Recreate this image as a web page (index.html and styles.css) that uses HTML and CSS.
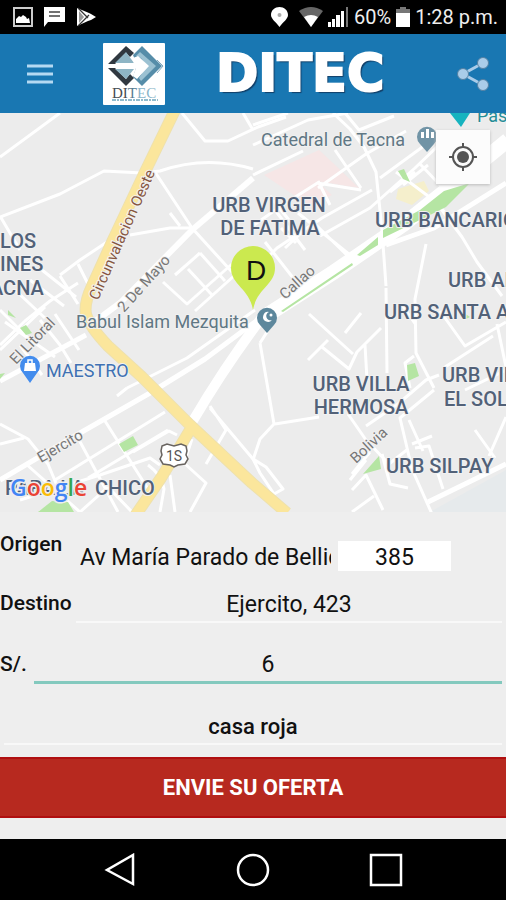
FILE: index.html
```html
<!DOCTYPE html>
<html lang="es">
<head>
<meta charset="utf-8">
<meta name="viewport" content="width=device-width, initial-scale=1">
<title>DITEC</title>
<link rel="stylesheet" href="styles.css">
</head>
<body>
<div class="status">
  <div class="status-group status-left">
    <svg width="20" height="20" viewBox="0 0 20 20"><rect x="1" y="1" width="18" height="18" fill="none" stroke="#ccc" stroke-width="2"/><path d="M3 16V12l3-3 2 1 2-2 3 2 1 2 2-1 1 5z" fill="#fff"/></svg>
    <svg width="21" height="20" viewBox="0 0 21 20"><path d="M0 0h21v15H4l-4 5z" fill="#fff"/><path d="M5 5h11M5 9h11" stroke="#444" stroke-width="1.5"/></svg>
    <svg width="20" height="20" viewBox="0 0 20 20"><path d="M1 1L13 6l2 1 5 3-5 3-3 1L1 19z" fill="#fff"/><path d="M2 1l10 10M2 19L13 8" stroke="#333" stroke-width="1.3"/><path d="M3 4v12l5-6z" fill="#999"/></svg>
  </div>
  <div class="status-group status-right">
    <svg width="17" height="20" viewBox="0 0 17 20"><path d="M8.500 0C4 0 0 3 0 8c0 4 5 7 8.500 12C12 15 17 12 17 8c0-5-4-8-8.500-8z" fill="#fff"/><circle cx="8.500" cy="8" r="2" fill="#aaa"/></svg>
    <svg class="wifi" width="24" height="20" viewBox="0 0 24 20"><path d="M0 4Q12-4 24 4L12 20z" fill="#666"/><path d="M5 10q7-4 14 0l-7 10z" fill="#fff"/></svg>
    <svg width="21" height="20" viewBox="0 0 21 20"><path d="M0 15h3v5H0zM4 12h3v8H4zM8 8h4v12H8zM13 4h3v16h-3z" fill="#fff"/><path d="M18 0h2v20h-2z" fill="#777"/></svg>
    <span class="battery-text">60%</span>
    <svg width="14" height="20" viewBox="0 0 14 20"><path d="M4 0h6v2h4v5H0V2h4z" fill="#777"/><path d="M0 6h14v14H0z" fill="#fff"/></svg>
    <span class="clock">1:28 p.m.</span>
  </div>
</div>

<header class="appbar">
  <button class="icon-button" type="button" aria-label="Menú">
    <svg width="28" height="20" viewBox="0 0 28 20"><path d="M1 2h26M1 10h26M1 18h26" stroke="#b5d9f2" stroke-width="3"/></svg>
  </button>
  <svg class="logo" width="62" height="62" viewBox="0 0 62 62" aria-hidden="true">
    <rect width="62" height="62" rx="1" fill="#fff"/>
    <path d="M39 3l-9 9 4 10-4 12 9 9 20-20z" fill="#568da9"/>
    <path d="M37 9l-4 4 5 2 6 8-8 12 2 3 15-15z" fill="#9bc1d2"/>
    <path d="M5 21L23 3l8 7-4 4-4-4-11 11zM5 25l18 18 8-8-4-4-4 5-11-11z" fill="#303840"/>
    <path d="M12 20L23 9l8 11zM12 26l11 10 8-10z" fill="#8eb5c5"/>
    <path d="M4 20q2 2 7 1h20l-1-6 5-2 11 10-12 13-4-3 3-8H12q-5-1-8-5z" fill="#fff"/>
    <path d="M54 17l6 6-6 7" fill="none" stroke="#80a7be"/>
    <text class="logo-text" x="9" y="55" fill="#454b52">DI<tspan fill="#557b91">T</tspan><tspan fill="#8bb5c9">EC</tspan></text>
    <path d="M9 57h46" stroke="#6ca5bd" stroke-width="1.500" stroke-dasharray="4 1 2 1"/>
  </svg>
  <h1 class="title">DITEC</h1>
  <button class="icon-button" type="button" aria-label="Compartir">
    <svg width="34" height="36" viewBox="0 0 34 36"><path d="M27 7L7 18l20 11" fill="none" stroke="#a9cce9" stroke-width="3"/><g fill="#a9cce9" stroke="#5481a3"><circle cx="27" cy="7" r="5.500"/><circle cx="7" cy="18" r="5.500"/><circle cx="27" cy="29" r="5.500"/></g></svg>
  </button>
</header>

<main class="content">
<section class="map" aria-label="Mapa">
  <svg class="map-canvas" viewBox="0 113 506 399" preserveAspectRatio="xMidYMid slice">
    <path d="M0 100h506v420H0z" fill="#ececec"/>
    <path d="M430 512l76-42v42z" fill="#e6eaec"/>
    <path d="M264 175l55-25 14 13 26 25-42-7 15 14-22 11z" fill="#f6e6e6"/>
    <g fill="#f5efcc"><path d="M398 189l26-8 5 10-17 14-16-6z"/></g>
    <g class="roads">
      <path d="M0 157l60-44M0 217l60-23 44-23 38 2 18-2q46-16 93-2M182 113l23 28h23l30-14 28-10M243 113l10 17M155 172l37 56 40 44M130 235l40-7h22M170 213l10 13M60 275l20-15 30-20M78 264l12 24M42 270l34 27M30 280l34 26M15 290l30 28M0 216l20 34M0 310l28 28M60 276l18 28M0 345l25-24 25-20 28-18"/>
      <path d="M175 275l25-22M188 269l24 26M200 253l25 28M163 282l24 22 45-40M195 311l40-36"/>
      <path d="M127 388l60-30 68-48M127 388l-10 8M0 424l28 15 20 25 20 48M105 421l43 68M0 444l24-6M26 464l54 48M78 438l40 74M55 480l110-68M88 478l80-48M133 452l36-21 8 4M20 500l80-25 50-17 10 7M170 475l5 37M148 465q14 10 16 24l-4 23M192 439l-8 24 22 20-16 29M206 464l20-34-16-24M184 464l-22-6M210 408l43 51M40 512l40-24M80 512l28-25M108 487l24 25"/>
      <path d="M0 350l45-43M40 320l20 25 11 18M20 345l22 30M55 314l24 36M5 322l50 35"/>
      <path d="M253 125l35-12M253 145l55-25 40-7M253 175l50-24M318 188l48-34 40-23M333 113l17 16 14 18 12 25 6 58 4 56M345 113l14 17 35-14M335 150l26 38M372 190l-50 28-45 30-22 22M317 183l44 7M254 225l27-19 38-24M318 181l12 24M298 213l52 42M316 225l35 34M270 196l30 38-15 14M320 236l50-28 45-40 25-24M281 228l15 15M275 210l30 40M265 242l36 46"/>
      <path d="M380 178l52-38M396 172l40 30 16 19M420 164l21 22M390 192l25-20M403 185l25-20"/>
      <path d="M436 202l26 35 15 25 25 34M260 343l14 81-14 15-7 21M275 424l44-7M267 332l-7 11M309 314l44 40M308 360l20-20M322 347l27 22 8-17 24-24M345 333l16-20M365 345l2 35M386 288l1 85M426 244l-11 55 1 54 18 35M402 305l14 20M414 356l-9 7 5 25M366 426l32-22 28-24 13-5M348 414l18 26 23 24 19-15M434 390l-34 28 12 51 20 45M409 420l14 31M352 474l18-22M352 490l14-15 17 35M352 512l22-16M382 454l8 30 18 4M412 444l20-8M415 448l14-2 14 43M475 430l20 28M506 417l-17 39M253 459l13 8 17 22-9 5-14-21-7-14M440 311l25 35 41-24M497 324l10 48M445 367l48-31M465 390l41-20M350 480l16-20"/>
      <path d="M0 480l73-43 77-44 55-34 50-37" stroke-width="5"/>
      <path d="M0 381l86-46" stroke-width="5"/>
      <path d="M253 178l-61 52-72 73-34 25" stroke-width="6"/>
      <path d="M428 502l78-38M386 245l48-17 72-45" stroke-width="5"/>
    </g>
    <g fill="none" stroke="#fff"><path d="M508 140l-44 36-60 48-70 48-70 45" stroke-width="15"/><path d="M263 316q-38 50-72 108" stroke-width="10"/></g>
    <g fill="#b5e5a3">
      <path d="M281 311l71-48 1 2-70 47zM357 255l21-18v8l-18 11zM383 230l37-20 24-19 26-8-24 24-22 11-41 20z"/>
      <path d="M119 444l14-8 5 9-14 7zM38 512l14-11 16 1 6 10zM363 474l16-18 2 13zM407 365l8-2 4 13-11 5zM364 403l6-4-5 16zM398 171l6-2 6 13-7-3zM0 374l5-1-5 6zM8 310l8 8-8-3zM20 328l6-3 6 8-6 2zM464 313l6 4-4 2z"/>
    </g>
    <g fill="none" stroke-linejoin="round"><path d="M176 108l-32 66-32 68-20 44q-8 17-6 28 3 12 22 32l34 31 48 48 62 58 35 30M190 430l-29 48-26 38" stroke="#eee1ad" stroke-width="12"/><path d="M176 108l-32 66-32 68-20 44q-8 17-6 28 3 12 22 32l34 31 48 48 62 58 35 30M190 430l-29 48-26 38" stroke="#fbe69c" stroke-width="10"/></g>

    <g class="street">
      <text transform="translate(98 301) rotate(-66)" class="brown">Circunvalacion Oeste</text>
      <text transform="translate(124 313) rotate(-48)">2 De Mayo</text>
      <text transform="translate(285 300) rotate(-42)">Callao</text>
      <text transform="translate(16 365) rotate(-46)">El Litoral</text>
      <text transform="translate(41 463) rotate(-30)">Ejercito</text>
      <text transform="translate(356 464) rotate(-43)">Bolivia</text>
    </g>
    <g class="area">
      <text x="0" y="248">LOS</text><text x="0" y="271">INES</text><text x="-10" y="295">ACNA</text>
      <text x="269" y="212" text-anchor="middle">URB VIRGEN</text><text x="270" y="235" text-anchor="middle">DE FATIMA</text>
      <text x="375" y="227">URB BANCARIO</text><text x="448" y="287">URB ALTO</text><text x="384" y="319">URB SANTA ANA</text>
      <text x="361" y="391" text-anchor="middle">URB VILLA</text><text x="361" y="414" text-anchor="middle">HERMOSA</text>
      <text x="442" y="382">URB VILLA</text><text x="444" y="406">EL SOL</text><text x="386" y="473">URB SILPAY</text>
      <text x="5" y="495">PARA LA</text><text x="95" y="495">CHICO</text>
    </g>
    <g class="place">
      <text x="261" y="146">Catedral de Tacna</text><text x="76" y="328">Babul Islam Mezquita</text>
      <text x="46" y="377" class="shop">MAESTRO</text><text x="477" y="122" class="teal">Paseo</text>
    </g>
    <path d="M450 113h20l-9 14z" fill="#16b3bf"/>
    <g transform="translate(427 137)"><path d="M0 15l-7-8a10 10 0 1 1 14 0z" fill="#7194a6"/><path d="M-6 1v-6h3V1zM-1 1v-9h3V1zM4 1v-6h3V1z" fill="#fff"/></g>
    <g transform="translate(267 318)"><path d="M0 15l-7-8a10 10 0 1 1 14 0z" fill="#5d879c"/><path d="M2-6A5 5 0 1 0 5 2 4 4 0 1 1 2-6z" fill="#fff"/><circle cx="4" cy="-3" r="1.500" fill="#fff"/></g>
    <g transform="translate(30 366)"><path d="M0 17l-7-10a10 10 0 1 1 14 0z" fill="#438ced"/><path d="M-5-3H5l1 8H-6z" fill="#fff"/><path d="M-2-2v-4h4v4" fill="none" stroke="#fff" stroke-width="1.500"/></g>
    <path d="M253 310c-4-22-22-25-22-42a22 22 0 0 1 44 0c0 17-18 20-22 42z" fill="#cbe94f"/>
    <text x="256" y="280" text-anchor="middle" class="pin">D</text>
    <path d="M162 446l5-2 7 2 7-2 5 2 1 5-1 4 2 4-3 5-7 1-4 2-4-2-7-1-3-5 2-4-1-4z" fill="#fff" stroke="#68635f" stroke-width="1.500"/>
    <text x="174" y="461" text-anchor="middle" class="shield">1S</text>
    <text x="10" y="496" class="google"><tspan fill="#4285f4">G</tspan><tspan fill="#ea4335">o</tspan><tspan fill="#fbbc05">o</tspan><tspan fill="#4285f4">g</tspan><tspan fill="#34a853">l</tspan><tspan fill="#ea4335">e</tspan></text>
  </svg>
  <button class="locate" type="button" aria-label="Mi ubicación">
    <svg width="30" height="30" viewBox="0 0 30 30"><circle cx="15" cy="15" r="10" fill="none" stroke="#555" stroke-width="2"/><circle cx="15" cy="15" r="6" fill="#555"/><path d="M15 1v5M15 24v5M1 15h5M24 15h5" stroke="#555" stroke-width="2"/></svg>
  </button>
</section>

<form class="trip">
  <div class="row origin"><label for="origen">Origen</label><input id="origen" class="street-input" type="text" value="Av María Parado de Bellido"><input class="number" type="text" value="385" aria-label="Número"></div>
  <div class="row"><label for="destino">Destino</label><input id="destino" class="line" type="text" value="Ejercito, 423"></div>
  <div class="row price"><label for="oferta">S/.</label><input id="oferta" class="line active" type="text" value="6"></div>
  <div class="row note"><input class="line strong" type="text" value="casa roja" aria-label="Referencia"></div>
  <button class="submit" type="button">ENVIE SU OFERTA</button>
</form>
</main>

<nav class="system-nav">
  <button type="button" aria-label="Atrás"><svg width="34" height="34" viewBox="0 0 34 34"><path d="M30 2v29L4 17z" fill="none" stroke="#fff" stroke-width="2.500"/></svg></button>
  <button type="button" aria-label="Inicio"><svg width="34" height="34" viewBox="0 0 34 34"><circle cx="17" cy="17" r="15" fill="none" stroke="#fff" stroke-width="2.500"/></svg></button>
  <button type="button" aria-label="Recientes"><svg width="34" height="34" viewBox="0 0 34 34"><path d="M2 2h30v30H2z" fill="none" stroke="#fff" stroke-width="2.500"/></svg></button>
</nav>
</body>
</html>
```
FILE: styles.css
```css
* { box-sizing: border-box; }
body {
  margin: 0;
  min-height: 100vh;
  display: flex;
  flex-direction: column;
  background: #eee;
  color: #111;
  font-family: Roboto, "Liberation Sans", sans-serif;
}
button { padding: 0; border: 0; background: none; cursor: pointer; }
svg { display: block; flex: none; }

.status {
  height: 34px;
  padding: 0 8px 0 13px;
  display: flex;
  align-items: center;
  justify-content: space-between;
  background: #000;
  color: #eee;
  white-space: nowrap;
}
.status-group { display: flex; align-items: center; }
.status-left { gap: 11px; }
.status-right { gap: 5px; }
.wifi { margin-left: 6px; }
.battery-text,
.clock { font-size: 20px; }

.appbar {
  height: 79px;
  padding: 0 16px 0 26px;
  display: flex;
  align-items: center;
  background: #1977b2;
}
.logo { margin-left: 49px; }
.logo-text { font: 15px "Liberation Serif", serif; }
.title {
  flex: 1;
  margin: 0 0 0 51px;
  color: #fff;
  font: 700 51px/60px "DejaVu Sans", sans-serif;
  -webkit-text-stroke: 2px #fff;
  text-shadow: 2px 2px 1px #123f68;
}

.content { flex: 1; display: flex; flex-direction: column; }
.map { position: relative; flex: 1 0 300px; overflow: hidden; }
.map-canvas { position: absolute; inset: 0; width: 100%; height: 100%; }
.roads { fill: none; stroke: #fff; stroke-width: 3px; stroke-linejoin: round; }
.area text, .place text, .street text { paint-order: stroke; stroke: #f1f1f1; stroke-width: 2px; }
.area { font-size: 20px; font-weight: 500; fill: #526178; }
.place { font-size: 18px; fill: #607784; }
.place .shop { fill: #4071b3; }
.place .teal { fill: #258d96; }
.street { font-size: 15px; fill: #777; }
.street .brown { fill: #86563f; }
.pin { font: 28px "Liberation Sans", sans-serif; fill: #111; }
.shield { font-size: 14px; fill: #555; }
.google { font: 600 23px "Open Sans", sans-serif; paint-order: stroke; stroke: #eee; stroke-width: 3px; }
.locate {
  position: absolute;
  top: 17px;
  right: 16px;
  width: 54px;
  height: 54px;
  display: grid;
  place-items: center;
  background: #fcfcfc;
  box-shadow: 0 1px 3px #bbb;
}

.trip { padding: 29px 0 21px; }
.row { display: flex; height: 38px; padding-right: 4px; align-items: center; }
.row label { font-size: 21px; line-height: 24px; font-weight: 500; }
.row input {
  min-width: 0;
  padding: 2px 0 0;
  border: 0;
  border-radius: 0;
  outline: 0;
  background: transparent;
  color: #111;
  font-family: inherit;
  font-size: 23px;
  text-align: center;
}
.row .street-input { flex: 0 1 251px; height: 30px; text-align: left; }
.row .number { flex: 0 1 113px; height: 30px; margin-left: 7px; background: #fff; }
.row .line { flex: 1; height: 40px; padding-top: 4px; border-bottom: 2px solid #f8f8f8; }
.row .active { border-bottom: 3px solid #83c9be; }
.row .strong { font-size: 22px; font-weight: 500; }
.origin { height: 30px; margin-bottom: 13px; align-items: flex-start; }
.origin label { flex: 0 0 80px; line-height: 6px; }
.row label[for="destino"] { flex: 0 0 76px; }
.price { margin: 23px 0; }
.price label { flex: 0 0 34px; }
.note { padding-left: 4px; margin-bottom: 13px; }
.submit {
  display: block;
  width: 100%;
  height: 61px;
  border: 1px solid #b00f10;
  border-width: 2px 0;
  background: #b7291f;
  color: #fff;
  font: 700 22px Roboto, sans-serif;
}

.system-nav {
  height: 61px;
  padding: 0 53px;
  display: flex;
  align-items: center;
  justify-content: space-around;
  background: #000;
}
```
